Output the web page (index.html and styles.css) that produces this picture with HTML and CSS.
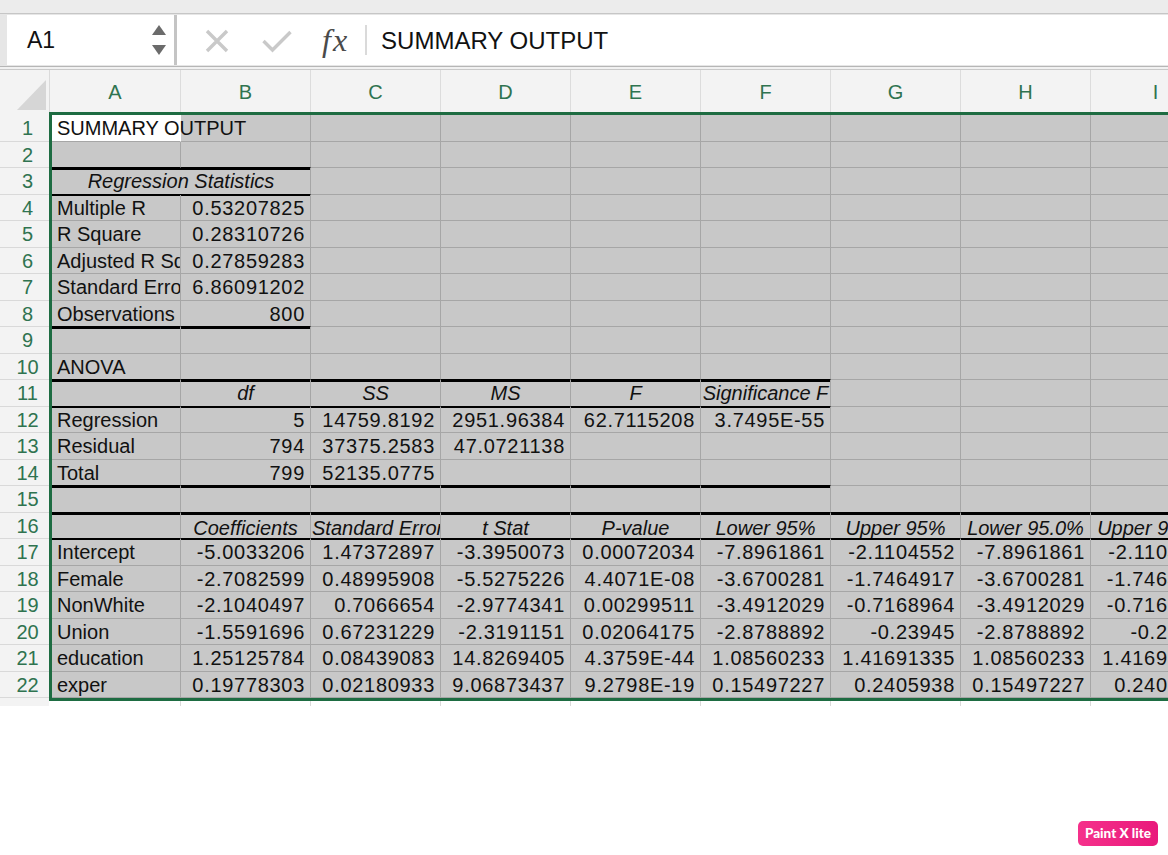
FILE: index.html
```html
<!DOCTYPE html>
<html>
<head>
<meta charset="utf-8">
<link rel="stylesheet" href="styles.css">
</head>
<body>
<div class="app">
  <div class="topstrip"></div>
  <div class="fbar">
    <div class="namebox">
      <span class="nb-text">A1</span>
      <svg class="spin" width="14" height="30" viewBox="0 0 14 30"><polygon points="7,0 14,10 0,10" fill="#6b6b6b"/><polygon points="0,20 14,20 7,30" fill="#6b6b6b"/></svg>
    </div>
    <div class="nb-gap"></div>
    <div class="formula">
      <svg class="ic-x" width="24" height="24" viewBox="0 0 24 24"><path d="M2 2 L22 22 M22 2 L2 22" stroke="#c9c9c9" stroke-width="3.4" fill="none"/></svg>
      <svg class="ic-ok" width="30" height="24" viewBox="0 0 30 24"><polyline points="1.5,12 10.5,21 28.5,3" stroke="#c9c9c9" stroke-width="3.4" fill="none"/></svg>
      <span class="fx">fx</span>
      <span class="fsep"></span>
      <span class="ftext">SUMMARY OUTPUT</span>
    </div>
  </div>
  <div class="fbar-edge"></div>

  <div class="sheet">
    <div class="colheads">
      <div class="corner"><svg width="50" height="42" viewBox="0 0 50 42"><polygon points="17,40 46,40 46,10" fill="#d6d6d6"/></svg></div>
      <div class="ch cha">A</div><div class="ch">B</div><div class="ch">C</div><div class="ch">D</div><div class="ch">E</div><div class="ch">F</div><div class="ch">G</div><div class="ch">H</div><div class="ch">I</div>
    </div>
    <div class="body">
      <div class="rowheads">
        <div class="rh">1</div><div class="rh">2</div><div class="rh">3</div><div class="rh">4</div><div class="rh">5</div><div class="rh">6</div><div class="rh">7</div><div class="rh">8</div><div class="rh">9</div><div class="rh">10</div><div class="rh">11</div><div class="rh">12</div><div class="rh">13</div><div class="rh">14</div><div class="rh">15</div><div class="rh">16</div><div class="rh">17</div><div class="rh">18</div><div class="rh">19</div><div class="rh">20</div><div class="rh">21</div><div class="rh">22</div>
      </div>
      <div class="sel">
        <!-- row 1 -->
        <div class="c a1">SUMMARY OUTPUT</div><div class="c"></div><div class="c"></div><div class="c"></div><div class="c"></div><div class="c"></div><div class="c"></div><div class="c"></div><div class="c"></div>
        <!-- row 2 -->
        <div class="c bk"></div><div class="c bk"></div><div class="c"></div><div class="c"></div><div class="c"></div><div class="c"></div><div class="c"></div><div class="c"></div><div class="c"></div>
        <!-- row 3 -->
        <div class="c h span2 lt bk">Regression Statistics</div><div class="c"></div><div class="c"></div><div class="c"></div><div class="c"></div><div class="c"></div><div class="c"></div><div class="c"></div>
        <!-- row 4 -->
        <div class="c ln">Multiple R</div><div class="c n ln">0.53207825</div><div class="c"></div><div class="c"></div><div class="c"></div><div class="c"></div><div class="c"></div><div class="c"></div><div class="c"></div>
        <!-- row 5 -->
        <div class="c">R Square</div><div class="c n">0.28310726</div><div class="c"></div><div class="c"></div><div class="c"></div><div class="c"></div><div class="c"></div><div class="c"></div><div class="c"></div>
        <!-- row 6 -->
        <div class="c">Adjusted R Square</div><div class="c n">0.27859283</div><div class="c"></div><div class="c"></div><div class="c"></div><div class="c"></div><div class="c"></div><div class="c"></div><div class="c"></div>
        <!-- row 7 -->
        <div class="c">Standard Error</div><div class="c n">6.86091202</div><div class="c"></div><div class="c"></div><div class="c"></div><div class="c"></div><div class="c"></div><div class="c"></div><div class="c"></div>
        <!-- row 8 -->
        <div class="c bk">Observations</div><div class="c n bk">800</div><div class="c"></div><div class="c"></div><div class="c"></div><div class="c"></div><div class="c"></div><div class="c"></div><div class="c"></div>
        <!-- row 9 -->
        <div class="c lt"></div><div class="c lt"></div><div class="c"></div><div class="c"></div><div class="c"></div><div class="c"></div><div class="c"></div><div class="c"></div><div class="c"></div>
        <!-- row 10 -->
        <div class="c bk">ANOVA</div><div class="c bk"></div><div class="c bk"></div><div class="c bk"></div><div class="c bk"></div><div class="c bk"></div><div class="c"></div><div class="c"></div><div class="c"></div>
        <!-- row 11 -->
        <div class="c lt bk"></div><div class="c h lt bk">df</div><div class="c h lt bk">SS</div><div class="c h lt bk">MS</div><div class="c h lt bk">F</div><div class="c h lt bk">Significance F</div><div class="c"></div><div class="c"></div><div class="c"></div>
        <!-- row 12 -->
        <div class="c ln">Regression</div><div class="c n ln">5</div><div class="c n ln">14759.8192</div><div class="c n ln">2951.96384</div><div class="c n ln">62.7115208</div><div class="c n ln">3.7495E-55</div><div class="c"></div><div class="c"></div><div class="c"></div>
        <!-- row 13 -->
        <div class="c">Residual</div><div class="c n">794</div><div class="c n">37375.2583</div><div class="c n">47.0721138</div><div class="c"></div><div class="c"></div><div class="c"></div><div class="c"></div><div class="c"></div>
        <!-- row 14 -->
        <div class="c bk">Total</div><div class="c n bk">799</div><div class="c n bk">52135.0775</div><div class="c bk"></div><div class="c bk"></div><div class="c bk"></div><div class="c"></div><div class="c"></div><div class="c"></div>
        <!-- row 15 -->
        <div class="c lt bk"></div><div class="c lt bk"></div><div class="c lt bk"></div><div class="c lt bk"></div><div class="c lt bk"></div><div class="c lt bk"></div><div class="c bk"></div><div class="c bk"></div><div class="c bk"></div>
        <!-- row 16 -->
        <div class="c lt bk"></div><div class="c h hd lt bk">Coefficients</div><div class="c h hd lt bk">Standard Error</div><div class="c h hd lt bk">t Stat</div><div class="c h hd lt bk">P-value</div><div class="c h hd lt bk">Lower 95%</div><div class="c h hd lt bk">Upper 95%</div><div class="c h hd lt bk">Lower 95.0%</div><div class="c h hd lt bk">Upper 95.0%</div>
        <!-- row 17 -->
        <div class="c ln">Intercept</div><div class="c n ln">-5.0033206</div><div class="c n ln">1.47372897</div><div class="c n ln">-3.3950073</div><div class="c n ln">0.00072034</div><div class="c n ln">-7.8961861</div><div class="c n ln">-2.1104552</div><div class="c n ln">-7.8961861</div><div class="c n ln">-2.1104552</div>
        <!-- row 18 -->
        <div class="c">Female</div><div class="c n">-2.7082599</div><div class="c n">0.48995908</div><div class="c n">-5.5275226</div><div class="c n">4.4071E-08</div><div class="c n">-3.6700281</div><div class="c n">-1.7464917</div><div class="c n">-3.6700281</div><div class="c n">-1.7464917</div>
        <!-- row 19 -->
        <div class="c">NonWhite</div><div class="c n">-2.1040497</div><div class="c n">0.7066654</div><div class="c n">-2.9774341</div><div class="c n">0.00299511</div><div class="c n">-3.4912029</div><div class="c n">-0.7168964</div><div class="c n">-3.4912029</div><div class="c n">-0.7168964</div>
        <!-- row 20 -->
        <div class="c">Union</div><div class="c n">-1.5591696</div><div class="c n">0.67231229</div><div class="c n">-2.3191151</div><div class="c n">0.02064175</div><div class="c n">-2.8788892</div><div class="c n">-0.23945</div><div class="c n">-2.8788892</div><div class="c n">-0.23945</div>
        <!-- row 21 -->
        <div class="c">education</div><div class="c n">1.25125784</div><div class="c n">0.08439083</div><div class="c n">14.8269405</div><div class="c n">4.3759E-44</div><div class="c n">1.08560233</div><div class="c n">1.41691335</div><div class="c n">1.08560233</div><div class="c n">1.41691335</div>
        <!-- row 22 -->
        <div class="c">exper</div><div class="c n">0.19778303</div><div class="c n">0.02180933</div><div class="c n">9.06873437</div><div class="c n">9.2798E-19</div><div class="c n">0.15497227</div><div class="c n">0.2405938</div><div class="c n">0.15497227</div><div class="c n">0.2405938</div>
      </div>
    </div>
    <div class="tail">
      <div class="tail-rh"></div>
      <div class="tail-cells"><div class="tc ta"></div><div class="tc"></div><div class="tc"></div><div class="tc"></div><div class="tc"></div><div class="tc"></div><div class="tc"></div><div class="tc"></div><div class="tc"></div></div>
    </div>
  </div>
</div>
<div class="badge">Paint X lite</div>
</body>
</html>
```

FILE: styles.css
```css
html, body {
  margin: 0;
  padding: 0;
  background: #ffffff;
  overflow: hidden;
}
body {
  width: 1168px;
  height: 855px;
  position: relative;
  font-family: "Liberation Sans", Arial, sans-serif;
}
.app {
  width: 1168px;
  overflow: hidden;
}
.topstrip {
  height: 13px;
  background: #ececec;
  border-bottom: 1px solid #c6c6c6;
}
.fbar {
  display: flex;
  height: 50px;
  padding: 1px 0 1px 7px;
  background: #e6e6e6;
}
.namebox {
  width: 167px;
  background: #ffffff;
  display: flex;
  align-items: center;
  padding-left: 20px;
  padding-right: 8px;
  box-sizing: border-box;
}
.nb-text {
  font-size: 23px;
  color: #111;
  flex: 1;
}
.spin {
  display: block;
}
.nb-gap {
  width: 3px;
  background: #c4c4c4;
}
.formula {
  flex: 1;
  background: #ffffff;
  display: flex;
  align-items: center;
  padding-left: 28px;
}
.ic-x {
  display: block;
  margin-top: 2px;
}
.ic-ok {
  display: block;
  margin-left: 33px;
  margin-top: 1px;
}
.fx {
  margin-left: 30px;
  font-family: "Liberation Serif", "Times New Roman", serif;
  font-style: italic;
  font-size: 32px;
  letter-spacing: 2px;
  color: #4a4a4a;
  line-height: 1;
}
.fsep {
  width: 2px;
  height: 30px;
  background: #dadada;
  margin-left: 16px;
}
.ftext {
  margin-left: 14px;
  font-size: 24px;
  color: #111;
  margin-top: 2px;
}
.fbar-edge {
  height: 1px;
  background: #b6b6b6;
  border-bottom: 2px solid #f1f1f1;
  box-shadow: 0 1px 0 #c9c9c9;
  margin-bottom: 1px;
}

.sheet {
  height: 636px;
  overflow: hidden;
  width: 1168px;
}
.colheads {
  display: flex;
  height: 42px;
  background: #f3f3f3;
}
.corner {
  width: 50px;
  flex: none;
  border-right: 1px solid #dadada;
  box-sizing: border-box;
}
.corner svg { display: block; }
.ch {
  flex: none;
  width: 130px;
  box-sizing: border-box;
  border-right: 1px solid #dcdcdc;
  text-align: center;
  line-height: 45px;
  font-size: 20px;
  color: #2f7350;
}
.cha { width: 131px; }

.body {
  display: flex;
}
.rowheads {
  width: 49px;
  flex: none;
  background: #f3f3f3;
  padding: 3px 0;
  display: grid;
  grid-template-rows: repeat(11, 27px 26px);
}
.rh {
  box-sizing: border-box;
  border-bottom: 1px solid #d9d9d9;
  text-align: center;
  padding-left: 6px;
  font-size: 20px;
  line-height: 27px;
  color: #2f7350;
}
.sel {
  flex: none;
  border: 3px solid #1e6c42;
  border-right: none;
  background: #c8c8c8;
  display: grid;
  grid-template-columns: 129px repeat(8, 130px);
  grid-template-rows: repeat(11, 27px 26px);
}
.c {
  box-sizing: border-box;
  border-right: 1px solid #a6a6a6;
  border-bottom: 1px solid #a6a6a6;
  padding: 0 5px 0 5px;
  font-size: 20px;
  line-height: 27px;
  color: #111;
  white-space: nowrap;
  overflow: hidden;
  min-width: 0;
}
.a1 {
  background: #ffffff;
  border-right-color: #ffffff;
  overflow: visible;
  position: relative;
  z-index: 1;
}
.n {
  text-align: right;
  letter-spacing: 0.7px;
  padding-right: 5px;
}
.h {
  text-align: center;
  font-style: italic;
  padding: 0 1px;
}
.hd { line-height: 30px; }
.span2 { grid-column: span 2; }
.bk { border-bottom-color: #000; }
.lt { box-shadow: inset 0 2px 0 #000; }
.ln { box-shadow: inset 0 1px 0 #000; }

.tail {
  display: flex;
  height: 27px;
}
.tail-rh {
  width: 49px;
  flex: none;
  background: #f3f3f3;
}
.tail-cells {
  display: flex;
  padding-left: 3px;
}
.tc {
  flex: none;
  width: 130px;
  box-sizing: border-box;
  border-right: 1px solid #dadada;
}
.ta { width: 129px; }

.badge {
  position: absolute;
  left: 1078px;
  top: 821px;
  width: 80px;
  height: 25px;
  border-radius: 5px;
  background: linear-gradient(90deg, #f5318b, #e9197b);
  color: #fff;
  font-family: Lato, "Open Sans", sans-serif;
  font-weight: 900;
  font-size: 13.5px;
  line-height: 25px;
  text-align: center;
}
```
